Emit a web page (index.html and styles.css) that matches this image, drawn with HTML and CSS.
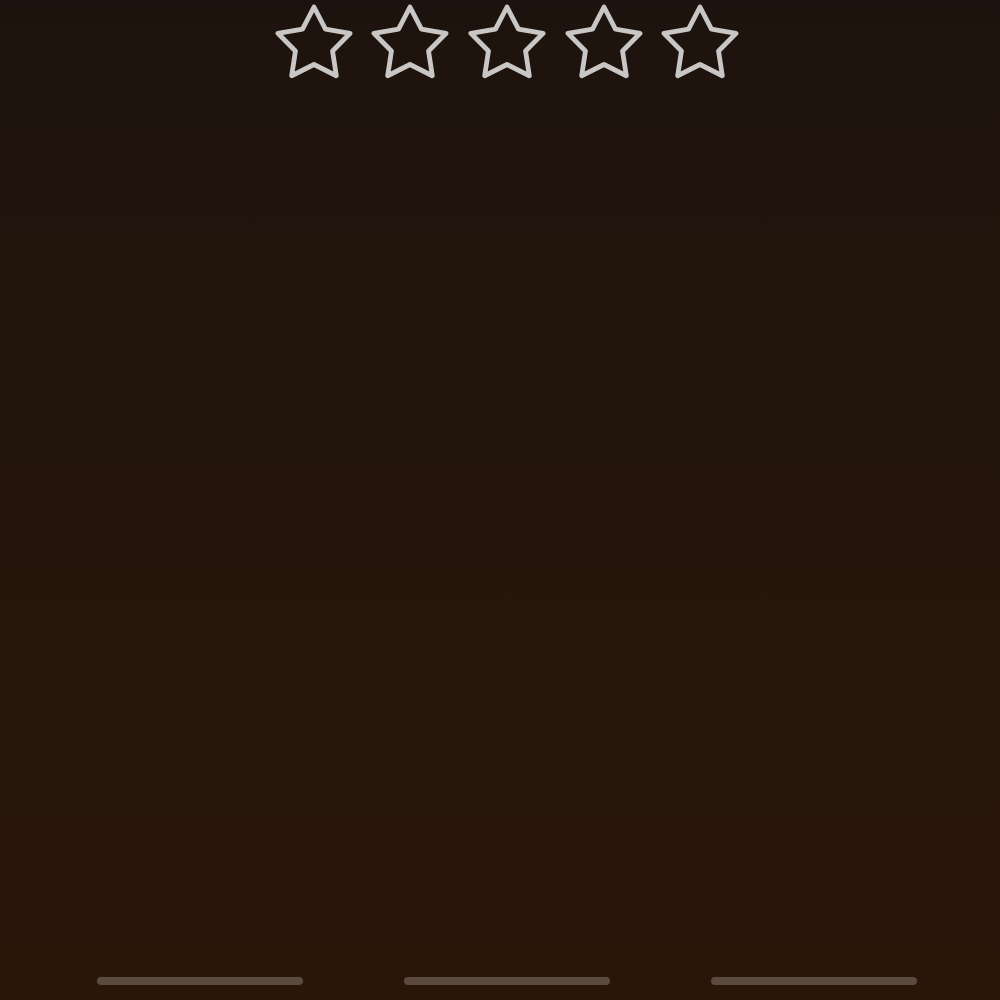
FILE: index.html
```html
<!DOCTYPE html>
<html lang="en">
<head>
    <meta charset="UTF-8">
    <meta name="viewport" content="width=device-width, initial-scale=1.0">
    <title>Rating</title>
    <link rel="stylesheet" href="styles.css">
</head>
<body>

<div class="screen">

    <div class="rating">
        <svg class="star" viewBox="0 0 80 80"><path d="M40 6 L51.46 28.22 L76.14 32.26 L58.55 50.03 L62.34 74.74 L40 63.5 L17.66 74.74 L21.45 50.03 L3.86 32.26 L28.54 28.22 Z"/></svg>
        <svg class="star" viewBox="0 0 80 80"><path d="M40 6 L51.46 28.22 L76.14 32.26 L58.55 50.03 L62.34 74.74 L40 63.5 L17.66 74.74 L21.45 50.03 L3.86 32.26 L28.54 28.22 Z"/></svg>
        <svg class="star" viewBox="0 0 80 80"><path d="M40 6 L51.46 28.22 L76.14 32.26 L58.55 50.03 L62.34 74.74 L40 63.5 L17.66 74.74 L21.45 50.03 L3.86 32.26 L28.54 28.22 Z"/></svg>
        <svg class="star" viewBox="0 0 80 80"><path d="M40 6 L51.46 28.22 L76.14 32.26 L58.55 50.03 L62.34 74.74 L40 63.5 L17.66 74.74 L21.45 50.03 L3.86 32.26 L28.54 28.22 Z"/></svg>
        <svg class="star" viewBox="0 0 80 80"><path d="M40 6 L51.46 28.22 L76.14 32.26 L58.55 50.03 L62.34 74.74 L40 63.5 L17.66 74.74 L21.45 50.03 L3.86 32.26 L28.54 28.22 Z"/></svg>
    </div>

    <div class="pager">
        <span class="bar"></span>
        <span class="bar"></span>
        <span class="bar"></span>
    </div>

</div>

</body>
</html>
```

FILE: styles.css
```css
body {
    margin: 0;
    padding: 0;
    height: 100vh;
    overflow: hidden;
    font-family: "Liberation Sans", Arial, sans-serif;
    background: linear-gradient(180deg, #1d130e 0%, #1f140c 10%, #22150c 40%, #27160b 75%, #2a1609 100%);
}

.screen {
    height: 100vh;
    display: flex;
    flex-direction: column;
    justify-content: space-between;
    align-items: center;
    padding-left: 14px;
    box-sizing: border-box;
}

.rating {
    display: flex;
    gap: 16.6px;
    margin-top: 1px;
}

.star {
    width: 80px;
    height: 80px;
    display: block;
}

.star path {
    fill: none;
    stroke: #c9c7c5;
    stroke-width: 4.8;
    stroke-linejoin: round;
}

.pager {
    display: flex;
    gap: 101px;
    margin-bottom: 15px;
}

.bar {
    width: 206px;
    height: 8px;
    border-radius: 4px;
    background-color: #5a4a40;
}
```
